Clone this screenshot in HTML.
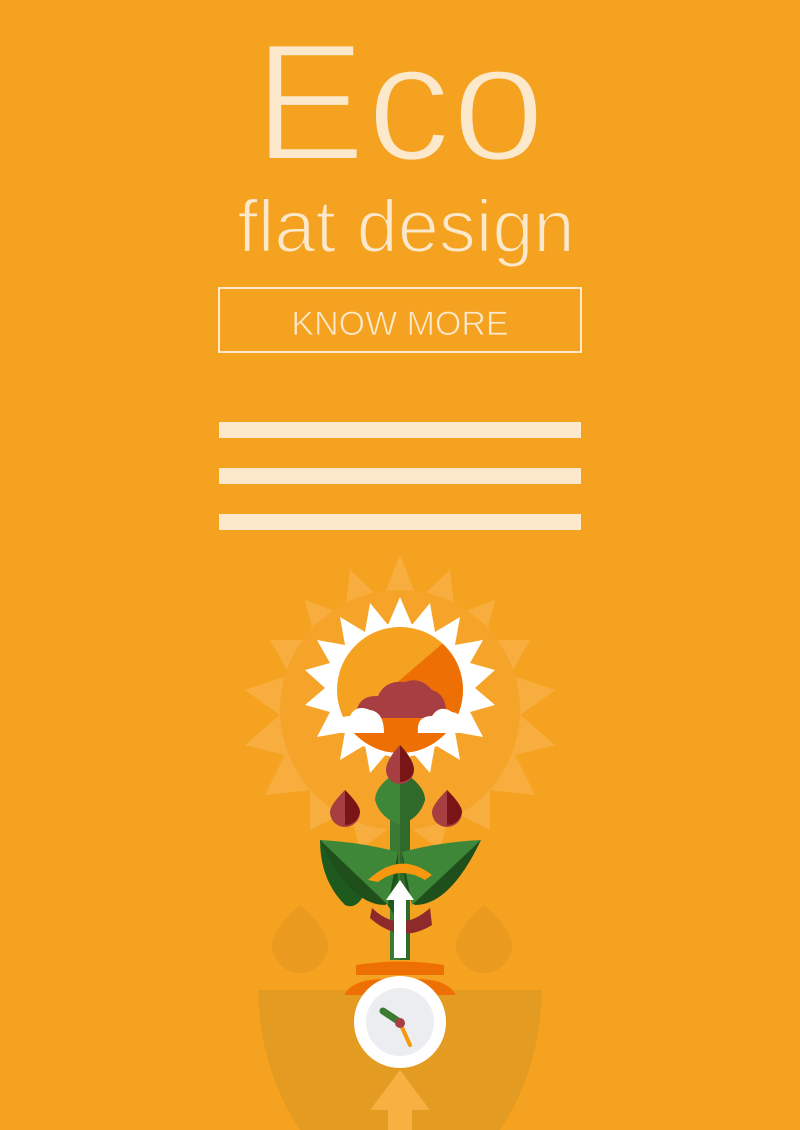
<!DOCTYPE html>
<html><head><meta charset="utf-8"><style>
html,body{margin:0;padding:0}
body{width:800px;height:1130px;background:#F5A220;position:relative;overflow:hidden;font-family:"Liberation Sans",sans-serif;color:#FCE8CB}
.eco{position:absolute;left:0;width:800px;top:12px;text-align:center;font-size:168px;line-height:180px;letter-spacing:1px;-webkit-text-stroke:4px #F5A220}
.flat{position:absolute;left:6px;width:800px;top:182px;text-align:center;font-size:74px;line-height:90px;-webkit-text-stroke:2px #F5A220}
.btn{position:absolute;left:218px;top:287px;width:360px;height:62px;border:2px solid #FCE8CB;text-align:center;font-size:34px;line-height:70px;-webkit-text-stroke:0.8px #F5A220}
.bar{position:absolute;left:219px;width:362px;height:16px;background:#FCE8CB}
svg{position:absolute;left:0;top:0}
</style></head><body>
<div class="eco">Eco</div>
<div class="flat">flat design</div>
<div class="btn">KNOW MORE</div>
<div class="bar" style="top:422px"></div>
<div class="bar" style="top:468px"></div>
<div class="bar" style="top:514px"></div>
<svg width="800" height="1130" viewBox="0 0 800 1130">
<g fill="#F8B043" opacity="0.9">
<polygon points="400,555 418,600 450,570 455,615 495,600 485,640 530,640 510,675 555,690 520,715 555,745 515,755 535,795 490,790 490,830 450,810 440,850 400,820 360,850 350,810 310,830 310,790 265,795 285,755 245,745 280,715 245,690 290,675 270,640 315,640 305,600 345,615 350,570 382,600"/>
<circle cx="400" cy="710" r="120" fill="#F6A52A"/>
</g>
<path d="M258,990 L400,990 L400,1130 L300,1130 Q260,1070 258,990Z" fill="#E09A22" opacity="0.8"/>
<path d="M542,990 L400,990 L400,1130 L500,1130 Q540,1070 542,990Z" fill="#E09A22" opacity="0.8"/>
<polygon points="400,1070 430,1110 412,1110 412,1130 388,1130 388,1110 370,1110" fill="#F8B043"/>
<path d="M300,905 Q328,930 328,945 A28,28 0 0 1 272,945 Q272,930 300,905Z" fill="#EA9A1F"/>
<path d="M484,905 Q512,930 512,945 A28,28 0 0 1 456,945 Q456,930 484,905Z" fill="#EA9A1F"/>
<g fill="#fff">
<polygon points="400,597 412,625 430,603 435,632 460,617 455,645 483,640 470,663 495,670 475,688 495,705 470,712 483,737 455,732 460,760 435,745 430,773 412,752 400,780 388,752 370,773 365,745 340,760 345,732 317,737 330,712 305,705 325,688 305,670 330,663 317,640 345,645 340,617 365,632 370,603 388,625"/>
</g>
<circle cx="400" cy="690" r="67" fill="#fff"/>
<clipPath id="c"><circle cx="400" cy="690" r="63"/></clipPath>
<g clip-path="url(#c)">
<rect x="330" y="620" width="140" height="140" fill="#F5A220"/>
<polygon points="470,620 470,760 330,760 330,740" fill="#EE7004"/>
<rect x="330" y="718" width="140" height="50" fill="#EE7004"/>
<path d="M356,718 Q356,695 378,696 Q385,680 405,682 Q420,676 432,690 Q448,695 446,718Z" fill="#A63E42"/>
</g>
<path d="M336,733 Q334,716 350,716 Q356,704 370,710 Q384,712 384,733Z" fill="#fff"/>
<path d="M418,733 Q416,716 432,716 Q440,704 452,712 Q466,714 466,733Z" fill="#fff"/>
<rect x="390" y="790" width="20" height="170" fill="#3A7A33"/>
<rect x="400" y="790" width="10" height="170" fill="#2F6A2B"/>
<path d="M400,770 Q425,785 425,800 Q420,818 400,825 Q380,818 375,800 Q375,785 400,770Z" fill="#3F8738"/>
<path d="M400,770 Q425,785 425,800 Q420,818 400,825Z" fill="#2F6A2B"/>
<path d="M400,745 Q414,760 414,770 A14,14 0 0 1 386,770 Q386,760 400,745Z" fill="#A63E42"/>
<path d="M400,745 Q414,760 414,770 A14,14 0 0 1 400,782Z" fill="#7A1517"/>
<path d="M345,790 Q360,805 360,812 A15,15 0 0 1 330,812 Q330,805 345,790Z" fill="#A63E42"/>
<path d="M345,790 Q360,805 360,812 A15,15 0 0 1 345,825Z" fill="#7A1517"/>
<path d="M447,790 Q462,805 462,812 A15,15 0 0 1 432,812 Q432,805 447,790Z" fill="#A63E42"/>
<path d="M447,790 Q462,805 462,812 A15,15 0 0 1 447,825Z" fill="#7A1517"/>
<path d="M320,840 L398,852 L398,920 L370,880 Q360,912 345,905 Q320,880 320,840Z" fill="#1E5A1E"/>
<path d="M320,840 L398,852 Q395,900 385,905 Q350,905 320,840Z" fill="#1F4F1B"/>
<path d="M320,840 Q360,842 398,852 L388,905Z" fill="#3F8738"/>
<path d="M481,840 L402,852 Q405,900 415,905 Q450,905 481,840Z" fill="#1F4F1B"/>
<path d="M481,840 Q440,842 402,852 L412,905Z" fill="#3F8738"/>
<path d="M368,880 Q400,850 432,875 L425,880 Q400,865 378,882Z" fill="#F7980F"/>
<path d="M372,908 Q400,935 430,908 L432,925 Q400,945 370,918Z" fill="#8C2A2C"/>
<polygon points="400,880 414,900 406,900 406,958 394,958 394,900 386,900" fill="#fff"/>
<path d="M356,965 Q400,958 444,965 L444,975 L356,975Z" fill="#EE7004"/>
<path d="M344,995 Q355,975 400,980 Q445,975 456,995Z" fill="#EE7004"/>
<circle cx="400" cy="1022" r="46" fill="#fff"/>
<circle cx="400" cy="1022" r="34" fill="#ECEDF0"/>
<line x1="383" y1="1011" x2="398" y2="1021" stroke="#3A7A33" stroke-width="7" stroke-linecap="round"/>
<line x1="400" y1="1023" x2="410" y2="1045" stroke="#F7980F" stroke-width="4" stroke-linecap="round"/>
<circle cx="400" cy="1023" r="5" fill="#A63E42"/>
</svg>
</body></html>
